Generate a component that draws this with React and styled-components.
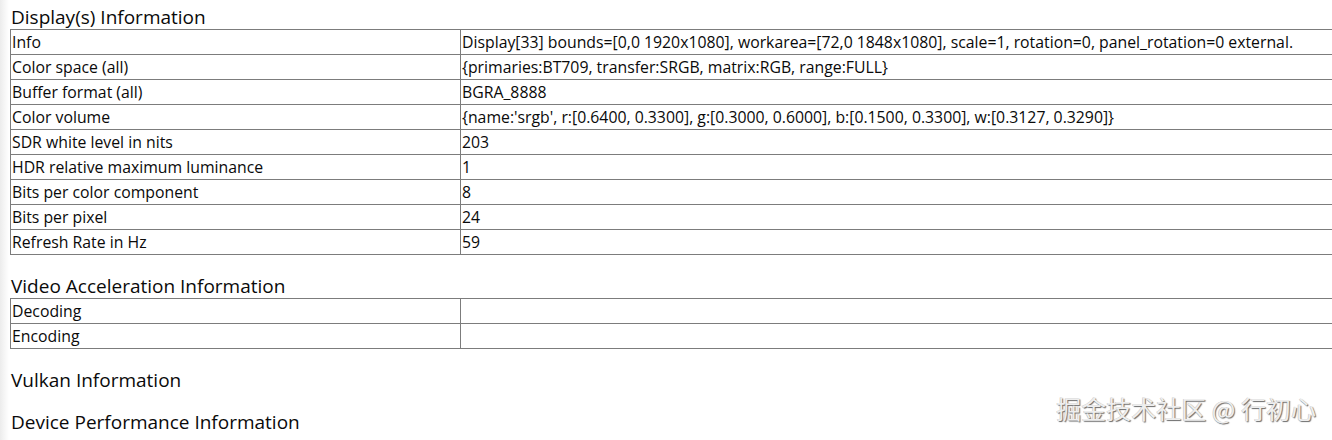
import React from "react"
import styled, { createGlobalStyle } from "styled-components"

const GlobalStyle = createGlobalStyle`
  html, body {
    margin: 0;
    padding: 0;
    overflow: hidden;
  }
  body {
    background: linear-gradient(to right, #ececec 0, #f7f7f7 5px, #fff 9px);
    font-family: "Open Sans", "Noto Sans", sans-serif;
    color: #0a0a0a;
  }
`

const displayRows = [
  ["Info", "Display[33] bounds=[0,0 1920x1080], workarea=[72,0 1848x1080], scale=1, rotation=0, panel_rotation=0 external."],
  ["Color space (all)", "{primaries:BT709, transfer:SRGB, matrix:RGB, range:FULL}"],
  ["Buffer format (all)", "BGRA_8888"],
  ["Color volume", "{name:'srgb', r:[0.6400, 0.3300], g:[0.3000, 0.6000], b:[0.1500, 0.3300], w:[0.3127, 0.3290]}"],
  ["SDR white level in nits", "203"],
  ["HDR relative maximum luminance", "1"],
  ["Bits per color component", "8"],
  ["Bits per pixel", "24"],
  ["Refresh Rate in Hz", "59"],
]

const videoRows = [
  ["Decoding", ""],
  ["Encoding", ""],
]

function InfoTable({ rows }) {
  return (
    <Table>
      <tbody>
        {rows.map(([label, value]) => (
          <tr key={label}>
            <LabelCell>{label}</LabelCell>
            <ValueCell>{value}</ValueCell>
          </tr>
        ))}
      </tbody>
    </Table>
  )
}

export default function App() {
  return (
    <Page>
      <GlobalStyle />
      <Section $first>
        <Heading>Display(s) Information</Heading>
        <InfoTable rows={displayRows} />
      </Section>
      <Section>
        <Heading>Video Acceleration Information</Heading>
        <InfoTable rows={videoRows} />
      </Section>
      <Section>
        <Heading>Vulkan Information</Heading>
      </Section>
      <Section $tight>
        <Heading>Device Performance Information</Heading>
      </Section>
      <Watermark>掘金技术社区 @ 行初心</Watermark>
    </Page>
  )
}

const Page = styled.div`
  position: relative;
  width: 1332px;
  height: 440px;
  box-sizing: border-box;
  padding: 5px 0 0 10px;
`

const Section = styled.section`
  margin-top: ${(p) => (p.$first ? "0" : p.$tight ? "18px" : "19px")};
`

const Heading = styled.h3`
  margin: 0;
  padding-left: 1px;
  font-size: 19px;
  font-weight: 500;
  line-height: 24px;
  color: #0a0a0a;
`

const Table = styled.table`
  border-collapse: collapse;
  width: 1340px;
  table-layout: fixed;
  font-size: 15.8px;
  font-weight: 500;
  line-height: 24px;

  td {
    border: 1px solid #7c7c7c;
    padding: 0 1px;
    height: 24px;
    box-sizing: border-box;
    white-space: nowrap;
    vertical-align: middle;
  }
`

const LabelCell = styled.td`
  width: 450px;
`

const ValueCell = styled.td``

const Watermark = styled.div`
  position: absolute;
  right: 16px;
  bottom: 17px;
  font-family: "Noto Sans CJK SC", sans-serif;
  font-size: 25px;
  line-height: 30px;
  color: #eeeeee;
  text-shadow: 1px 1px 1px #6a6a6a, -0.5px -0.5px 0 #c4c4c4;
`
